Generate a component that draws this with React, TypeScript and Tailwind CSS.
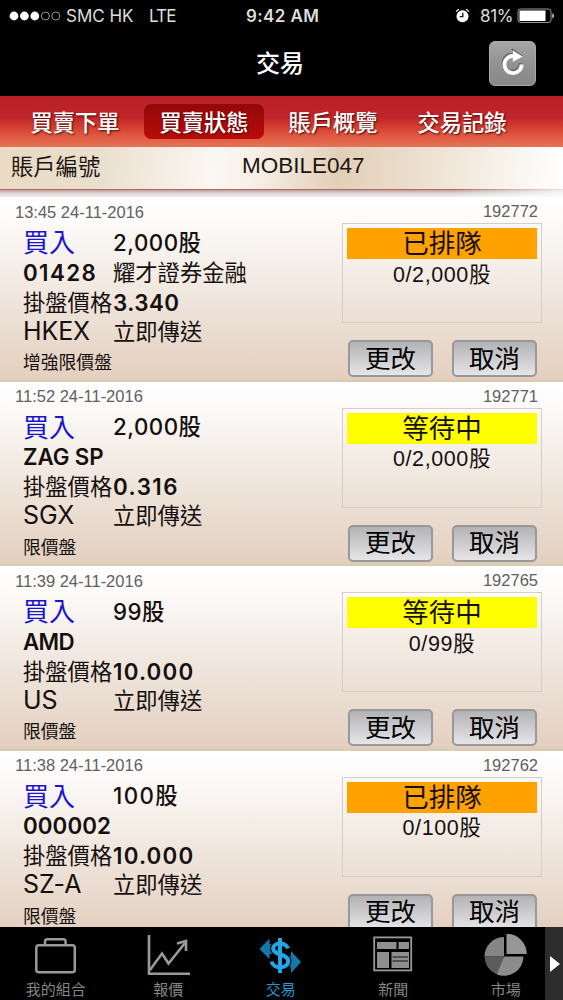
import React from "react";

type Order = {
  time: string;
  id: string;
  qty: string;
  qtyClass: string;
  code: string;
  name?: string;
  codeClass: string;
  price: string;
  priceClass: string;
  market: string;
  type: string;
  status: string;
  statusClass: string;
  filled: string;
};

const orders: Order[] = [
  { time: "13:45 24-11-2016", id: "192772", qty: "2,000股", qtyClass: "tracking-[0.5px]", code: "01428", name: "耀才證券金融", codeClass: "tracking-[1.4px]", price: "3.340", priceClass: "tracking-[0.5px]", market: "HKEX", type: "增強限價盤", status: "已排隊", statusClass: "bg-[#ffa200]", filled: "0/2,000股" },
  { time: "11:52 24-11-2016", id: "192771", qty: "2,000股", qtyClass: "tracking-[0.5px]", code: "ZAG SP", codeClass: "tracking-[-0.1px]", price: "0.316", priceClass: "tracking-[1.5px]", market: "SGX", type: "限價盤", status: "等待中", statusClass: "bg-[#ffff00]", filled: "0/2,000股" },
  { time: "11:39 24-11-2016", id: "192765", qty: "99股", qtyClass: "tracking-[0.4px]", code: "AMD", codeClass: "tracking-[-0.6px]", price: "10.000", priceClass: "tracking-[1.2px]", market: "US", type: "限價盤", status: "等待中", statusClass: "bg-[#ffff00]", filled: "0/99股" },
  { time: "11:38 24-11-2016", id: "192762", qty: "100股", qtyClass: "tracking-[1.4px]", code: "000002", codeClass: "tracking-[0.1px]", price: "10.000", priceClass: "tracking-[1.2px]", market: "SZ-A", type: "限價盤", status: "已排隊", statusClass: "bg-[#ffa200]", filled: "0/100股" },
];

function StatusBar() {
  return (
    <div className="flex h-8 shrink-0 items-center pl-[9px] pr-[8px] font-['Inter','Noto_Sans_CJK_TC',sans-serif] text-[17px] text-[#dedede]">
      <svg width="53" height="10" viewBox="0 0 53 10">
        <g fill="#fff">
          <circle cx="5" cy="5" r="4.4" />
          <circle cx="15.4" cy="5" r="4.4" />
          <circle cx="25.8" cy="5" r="4.4" />
        </g>
        <g fill="none" stroke="#999" strokeWidth="1">
          <circle cx="36.4" cy="5" r="4" />
          <circle cx="46.8" cy="5" r="4" />
        </g>
      </svg>
      <span className="ml-[4px] w-[83px] whitespace-nowrap">SMC HK</span>
      <span className="w-[97px] tracking-[-0.9px]">LTE</span>
      <span className="w-[209px] whitespace-nowrap font-semibold tracking-[0.4px]">9:42 AM</span>
      <svg width="15" height="16" viewBox="0 0 15 16">
        <circle cx="7.5" cy="8.3" r="6" fill="#fff" />
        <path d="M7.8 4.8V8.6H4.8" fill="none" stroke="#111" strokeWidth="1.3" />
        <path d="M1 3.6 3.8 1.3M14 3.6 11.2 1.3" stroke="#fff" strokeWidth="1.2" />
      </svg>
      <span className="ml-[10px] w-[37px] tracking-[-0.3px]">81%</span>
      <svg width="38" height="16" viewBox="0 0 38 16">
        <rect x="1" y="1" width="33" height="13.5" rx="2.5" fill="none" stroke="#999" strokeWidth="1" />
        <rect x="2.5" y="2.5" width="26" height="10.5" fill="#fff" />
        <path d="M35.3 5.2c2.3 1.2 2.3 4 0 5.2z" fill="#ccc" />
      </svg>
    </div>
  );
}

function TitleBar() {
  return (
    <header className="grid h-16 shrink-0 grid-cols-[1fr_auto_1fr] items-center pr-[27px] pl-[24px]">
      <span />
      <h1 className="text-[24px] font-medium text-white">交易</h1>
      <div className="mb-[2px] ml-auto flex h-[45px] w-[47px] items-center justify-center rounded-[6px] border border-[#aaa] bg-linear-to-b from-[#a6a6a6] via-[#929292] to-[#888888]">
        <svg width="26" height="30" viewBox="0 0 26 30">
          <path d="M14 8A8.600 8.600 0 1 0 21.600 16.500" transform="translate(-1 -1.500)" fill="none" stroke="#555" strokeWidth="3.6" opacity=".7" />
          <path d="M11.800 1 22 8" fill="none" stroke="#555" strokeWidth="1.5" />
          <path d="M14 8A8.600 8.600 0 1 0 21.600 16.500" fill="none" stroke="#fff" strokeWidth="3.8" />
          <path d="M13 2.500 22.500 8.500 12.800 14z" fill="#fff" />
        </svg>
      </div>
    </header>
  );
}

const tabs = ["買賣下單", "買賣狀態", "賬戶概覽", "交易記錄"];

function Tabs() {
  return (
    <nav className="flex h-[51px] shrink-0 items-center bg-[linear-gradient(180deg,#b91f28_0%,#c1252b_42%,#d03a2e_58%,#e0583f_78%,#e57358_100%)] pl-[15px]">
      {tabs.map((t) => (
        <div
          key={t}
          className={
            "mr-[9px] flex h-[35px] w-[120px] items-center justify-center rounded-[7px] pt-[4px] text-[22.3px] font-medium text-white [text-shadow:1px_1px_2px_#4a0808] " +
            (t === "買賣狀態" ? "bg-linear-to-b from-[#930808] to-[#b80c08]" : "")
          }
        >
          {t}
        </div>
      ))}
    </nav>
  );
}

function Account() {
  return (
    <>
      <div className="flex h-[42px] shrink-0 items-center bg-[linear-gradient(97deg,#e9dac3_0%,#eadfce_18%,#fbf7f2_38%,#f6efe6_46%,#e3cfb7_60%,#ecdfce_74%,#fbf8f4_94%,#fff_100%)] pl-[11px] text-[#1c1512]">
        <span className="w-[231px] pb-px text-[22.3px]">賬戶編號</span>
        <span className="pb-[3px] font-['Liberation_Sans',sans-serif] text-[22.5px]">MOBILE047</span>
      </div>
      <div className="h-[8px] shrink-0 bg-[linear-gradient(90deg,transparent_25%,transparent_80%,#ffffffcc_100%),linear-gradient(180deg,#c4605c_0%,#c4605c_12%,#b9aaa8_18%,#d9d4d2_50%,#f1eeec_100%)]" />
    </>
  );
}

function Action({ label }: { label: string }) {
  return (
    <button className="flex h-[37px] w-[85px] items-center justify-center rounded-[5px] border-2 border-[#989898] bg-linear-to-b from-[#b3b3b5] to-[#e6e6e8] text-[25.5px] leading-none text-black">
      {label}
    </button>
  );
}

function Card({ o }: { o: Order }) {
  return (
    <article className="flex h-[184.5px] shrink-0 justify-between bg-[linear-gradient(180deg,#ffffff_0%,#fdfbfa_12%,#f1e8e0_50%,#e4d0c0_97%,#d9c9b2_100%)] pr-[21px] text-[#15100e]">
      <div className="flex flex-col whitespace-nowrap pl-[23px] text-[22.3px]">
        <div className="-ml-2 flex h-[31px] items-center pb-[1px] font-['Liberation_Sans',sans-serif] text-[16.5px] text-[#606060]">{o.time}</div>
        <div className="flex h-[30px] items-center">
          <span className="w-[90px] text-[26px] text-[#1a14cc]">買入</span>
          <span className={"font-medium " + o.qtyClass}>{o.qty}</span>
        </div>
        <div className="flex h-[30px] items-center">
          <span className={"w-[90px] font-semibold " + o.codeClass}>{o.code}</span>
          <span>{o.name}</span>
        </div>
        <div className="flex h-[30px] items-center">
          <span className="w-[90px]">掛盤價格</span>
          <span className={"font-semibold " + o.priceClass}>{o.price}</span>
        </div>
        <div className="flex h-[28px] items-center">
          <span className="w-[90px] pb-[2px] text-[25px] tracking-[-0.1px]">{o.market}</span>
          <span>立即傳送</span>
        </div>
        <div className="mt-[4px] flex h-[26px] items-center text-[17.8px]">{o.type}</div>
      </div>
      <div className="flex w-[200px] flex-col">
        <div className="flex h-[26px] items-center justify-end pt-[3px] pr-[4px] font-['Liberation_Sans',sans-serif] text-[16.5px] text-[#606060]">{o.id}</div>
        <div className="flex h-[100px] flex-col border border-[#d6cdc6] p-[4px]">
          <div className={"flex h-[31px] items-center justify-center text-[26.5px] leading-none " + o.statusClass}>{o.status}</div>
          <div className="flex h-[33px] items-center justify-center font-['Liberation_Sans','Noto_Sans_CJK_TC',sans-serif] text-[21.5px] tracking-[0.6px]">{o.filled}</div>
        </div>
        <div className="mt-[17px] flex justify-between pr-[5px] pl-[6px]">
          <Action label="更改" />
          <Action label="取消" />
        </div>
      </div>
    </article>
  );
}

const BriefcaseIcon = () => (
  <svg width="48" height="46" viewBox="0 0 48 46" fill="none" stroke="#999" strokeWidth="2.5">
    <rect x="4.3" y="11.3" width="38.5" height="27" rx="2.5" />
    <path d="M13 11V7.500q0-2.300 2.300-2.300h16q2.300 0 2.300 2.300V11" />
  </svg>
);

const ChartIcon = () => (
  <svg width="48" height="46" viewBox="0 0 48 46" fill="none" stroke="#999" strokeWidth="2.6">
    <path d="M4 1v38.800h41" />
    <path d="M5 36 17 19.500l6.500 10L40 9" />
    <path d="M32 9.500 41 7v10" />
  </svg>
);

const TradeIcon = () => (
  <svg width="48" height="46" viewBox="0 0 48 46">
    <path d="M2.500 15 12.500 4.500V10h7v10h-7v5z" fill="#1279a8" />
    <path d="M44 28 34 17v5h-6v11h6v6z" fill="#1279a8" />
    <path d="M23 4v35" stroke="#21a7e8" strokeWidth="2.5" />
    <path d="M31 14.500C29 7.500 16.200 8 16.200 14.500c0 7 15 5 15 12.500 0 8-15 8.500-16.500.5" fill="none" stroke="#000" strokeWidth="6.5" />
    <path d="M31 14.500C29 7.500 16.200 8 16.200 14.500c0 7 15 5 15 12.500 0 8-15 8.500-16.500.5M23 4v35" fill="none" stroke="#21a7e8" strokeWidth="4" />
  </svg>
);

const NewsIcon = () => (
  <svg width="48" height="46" viewBox="0 0 48 46">
    <rect x="4.2" y="3.4" width="37" height="33" fill="none" stroke="#999" strokeWidth="1.8" />
    <g fill="#8e8e8e">
      <rect x="7" y="8" width="19.500" height="7" />
      <rect x="28.5" y="8" width="10.5" height="7" />
      <rect x="7" y="18" width="12" height="16" />
      <rect x="21.5" y="18" width="17.5" height="16" />
    </g>
    <path d="M22.500 23h15.500M22.500 27h15.500" stroke="#111" strokeWidth="1.2" />
  </svg>
);

const PieIcon = () => (
  <svg width="48" height="46" viewBox="0 0 48 46">
    <path d="M22 22.500V3A19.500 19.500 0 0 0 2.500 22.500z" fill="#858585" />
    <path d="M22 22.500H2.500A19.500 19.500 0 0 0 14.500 40.300z" fill="#5c5c5c" />
    <path d="M22 22.500 14.500 40.300A19.500 19.500 0 0 0 41.500 22.500z" fill="#8c8c8c" />
    <path d="M24.500 20V-.3A20.300 20.300 0 0 1 44.800 20z" fill="#969696" />
  </svg>
);

const nav = [
  { label: "我的組合", Icon: BriefcaseIcon },
  { label: "報價", Icon: ChartIcon },
  { label: "交易", Icon: TradeIcon },
  { label: "新聞", Icon: NewsIcon },
  { label: "市場", Icon: PieIcon },
];

function BottomNav() {
  return (
    <footer className="flex h-[73px] shrink-0 bg-black">
      <div className="flex w-[545px] shrink-0">
        {nav.map(({ label, Icon }) => (
          <div
            key={label}
            className={
              "flex w-[112.5px] shrink-0 flex-col items-center pt-[7px] text-[15px] leading-[19px] " +
              (label === "交易" ? "text-[#2298d4]" : "text-[#858585]")
            }
          >
            <Icon />
            <span className="pr-px">{label}</span>
          </div>
        ))}
      </div>
      <div className="relative flex w-[18px] items-center justify-center bg-[#2d2d2d] pl-px">
        <svg width="12" height="16" viewBox="0 0 12 16">
          <path d="M1 0 11 8 1 16z" fill="#fff" />
        </svg>
      </div>
    </footer>
  );
}

export default function App() {
  return (
    <div className="flex h-[1000px] w-[563px] flex-col overflow-hidden bg-black font-['Inter','Noto_Sans_CJK_TC',sans-serif] leading-none">
      <StatusBar />
      <TitleBar />
      <Tabs />
      <Account />
      <main className="flex min-h-0 flex-1 flex-col overflow-hidden">
        {orders.map((o) => (
          <Card key={o.id} o={o} />
        ))}
      </main>
      <BottomNav />
    </div>
  );
}
